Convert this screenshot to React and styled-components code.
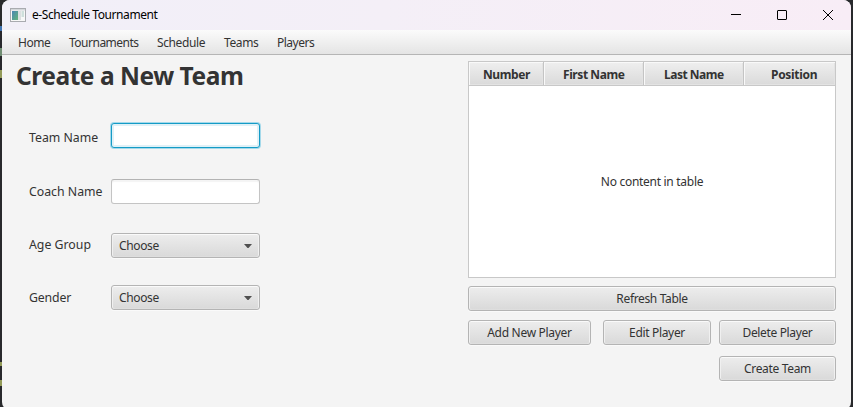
import React from "react";
import styled, { createGlobalStyle } from "styled-components";

const GlobalStyle = createGlobalStyle`
  *, *::before, *::after { box-sizing: border-box; }
  html, body { margin: 0; height: 100%; overflow: hidden; background: #28292c; }
  body, button, input { font-family: "Noto Sans", "Open Sans", sans-serif; font-size: 12px; color: #333; }
`;

const Desktop = styled.div`
  height: 407px;
  width: 853px;
  padding: 0 2px;
  overflow: hidden;
  background:
    linear-gradient(#3e72b0, #3e72b0) 0 26px / 2px 5px no-repeat,
    linear-gradient(#6f8d72, #6f8d72) 0 48px / 2px 8px no-repeat,
    linear-gradient(#929a58, #929a58) 0 70px / 2px 8px no-repeat,
    linear-gradient(#929a58, #929a58) 0 362px / 2px 4px no-repeat,
    linear-gradient(#929a58, #929a58) 0 380px / 2px 6px no-repeat,
    #28292c;
`;

const Window = styled.div`
  height: 410px;
  border-radius: 8px;
  overflow: hidden;
  background: #f4f4f4;
`;

const TitleBar = styled.header`
  display: flex;
  align-items: center;
  height: 30px;
  padding-left: 8px;
  background: linear-gradient(90deg, #f1eff8, #f4eff7 45%, #f8edf6);
`;

const WindowTitle = styled.div`
  flex: 1;
  margin-left: 6px;
  color: #000;
  line-height: 30px;
  letter-spacing: ${(p) => p.$track}px;
`;

const CaptionButton = styled.div`
  display: flex;
  width: 46px;
  height: 30px;
  align-items: center;
  justify-content: center;
`;

const CaptionButtons = styled.div`
  display: flex;
  padding-top: 0;
`;

const MenuBar = styled.nav`
  display: flex;
  height: 25px;
  padding-left: 16px;
  background: linear-gradient(#fbfbfb, #e4e4e4);
  border-bottom: 1px solid #b5b5b5;
`;

const MenuItem = styled.div`
  width: ${(p) => p.$w}px;
  line-height: 25px;
  letter-spacing: ${(p) => p.$track}px;
  white-space: nowrap;
`;

const Content = styled.main`
  display: grid;
  grid-template-columns: 466px 368px;
`;

const Heading = styled.h1`
  margin: 2px 0 0 14px;
  height: 38px;
  font-size: 24.5px;
  line-height: 38px;
  font-weight: 700;
  letter-spacing: ${(p) => p.$track}px;
`;

const Form = styled.form`
  display: grid;
  grid-template-columns: 82px 149px;
  grid-template-rows: 56px 54px 52px 25px;
  margin: 28px 0 0 27px;
`;

const Label = styled.label`
  height: 25px;
  margin-top: ${(p) => p.$dy || 0}px;
  line-height: 25px;
  font-size: 12.3px;
  letter-spacing: ${(p) => p.$track}px;
  white-space: nowrap;
`;

const TextField = styled.input`
  height: 25px;
  width: 149px;
  padding: 0 8px;
  border: 1px solid ${(p) => (p.$active ? "#159bc6" : "#c4c4c4")};
  border-top-color: ${(p) => (p.$active ? "#159bc6" : "#b3b3b3")};
  border-radius: 3px;
  background: #fff;
  box-shadow: ${(p) =>
    p.$active
      ? "0 0 0 1px #a5d9ea, inset 0 0 0 2px #e0f1f7"
      : "inset 0 2px 1px #f4f4f4"};
  outline: none;
`;

const raised = `
  height: 25px;
  border: 1px solid #b4b4b4;
  border-radius: 3px;
  background: linear-gradient(#ededed, #d9d9d9);
  box-shadow: inset 0 1px 0 #fafafa, inset 1px 0 0 #f0f0f0, inset -1px 0 0 #f0f0f0, inset 0 -1px 0 #dedede, 0 1px 0 #fafafa;
  line-height: 23px;
  white-space: nowrap;
`;

const ComboBox = styled.div`
  ${raised}
  display: flex;
  align-items: center;
  justify-content: space-between;
  padding: 0 7px;
  letter-spacing: ${(p) => p.$track}px;
`;

const Button = styled.button`
  ${raised}
  width: ${(p) => p.$w}px;
  padding: 0;
  letter-spacing: ${(p) => p.$track}px;
`;

const Panel = styled.section`
  padding-top: 6px;
`;

const Table = styled.div`
  height: 217px;
  border: 1px solid #c8c8c8;
  background: #fff;
`;

const HeaderRow = styled.div`
  display: grid;
  grid-template-columns: 75px 100px 100px 91px;
  height: 24px;
  border-bottom: 1px solid #c8c8c8;
`;

const HeaderCell = styled.div`
  height: 23px;
  padding-left: ${(p) => p.$pad}px;
  border-right: ${(p) => (p.$last ? 0 : 1)}px solid #c4c4c4;
  background: linear-gradient(#efefef, #dadada);
  box-shadow: inset 1px 1px 0 #f9f9f9, inset -1px -1px 0 #e3e3e3;
  font-weight: 700;
  line-height: 25px;
  letter-spacing: ${(p) => p.$track}px;
  white-space: nowrap;
`;

const Placeholder = styled.div`
  height: 191px;
  line-height: 192px;
  text-align: center;
  letter-spacing: ${(p) => p.$track}px;
`;

const ButtonRow = styled.div`
  display: flex;
  justify-content: ${(p) => (p.$end ? "flex-end" : "flex-start")};
  margin-top: ${(p) => p.$top}px;
`;

const Spacer = styled.div`
  width: ${(p) => p.$w}px;
`;

function AppIcon() {
  return (
    <svg width="16" height="14" viewBox="0 0 16 14">
      <defs>
        <linearGradient id="pane" x1="0" y1="0" x2="1" y2="1">
          <stop offset="0" stopColor="#4b86b4" />
          <stop offset="1" stopColor="#62b47a" />
        </linearGradient>
      </defs>
      <rect x="0.5" y="0.5" width="15" height="13" fill="#f8f8f8" stroke="#a9abb0" />
      <rect x="1" y="1" width="14" height="1.5" fill="#d3d6da" />
      <rect x="2" y="3" width="6" height="9" fill="url(#pane)" />
      <rect x="8" y="3" width="3" height="9" fill="#dcdfe0" />
      <rect x="11.5" y="3" width="2.5" height="6" fill="#cfe0dc" />
    </svg>
  );
}

function Arrow() {
  return (
    <svg width="8" height="5" viewBox="0 0 8 5">
      <path d="M0 1H8L4.5 5H3.5Z" fill="#505050" />
    </svg>
  );
}

const menus = [
  ["Home", 51, -0.45],
  ["Tournaments", 88, -0.5],
  ["Schedule", 67, -0.38],
  ["Teams", 53, -0.4],
  ["Players", 50, -0.5],
];

const columns = [
  ["Number", 14, -0.4],
  ["First Name", 19, -0.42],
  ["Last Name", 20, -0.5],
  ["Position", 27, -0.3],
];

export default function App() {
  return (
    <Desktop>
      <GlobalStyle />
      <Window>
        <TitleBar>
          <AppIcon />
          <WindowTitle $track={-0.42}>e-Schedule Tournament</WindowTitle>
          <CaptionButtons>
            <CaptionButton>
              <svg width="10" height="10" viewBox="0 0 10 10">
                <path d="M0 4.5H10" stroke="#000" />
              </svg>
            </CaptionButton>
            <CaptionButton>
              <svg width="10" height="10" viewBox="0 0 10 10">
                <rect x="0.5" y="0.5" width="9" height="9" rx="0.5" fill="none" stroke="#000" />
              </svg>
            </CaptionButton>
            <CaptionButton>
              <svg width="10" height="10" viewBox="0 0 10 10">
                <path d="M0 0L10 10M10 0L0 10" stroke="#000" />
              </svg>
            </CaptionButton>
          </CaptionButtons>
        </TitleBar>
        <MenuBar>
          {menus.map(([name, w, track]) => (
            <MenuItem key={name} $w={w} $track={track}>{name}</MenuItem>
          ))}
        </MenuBar>
        <Content>
          <section>
            <Heading $track={-0.46}>Create a New Team</Heading>
            <Form>
              <Label $dy={2} $track={0}>Team Name</Label>
              <TextField $active />
              <Label $track={0}>Coach Name</Label>
              <TextField />
              <Label $dy={-1} $track={0}>Age Group</Label>
              <ComboBox $track={-0.35}>Choose<Arrow /></ComboBox>
              <Label $track={-0.15}>Gender</Label>
              <ComboBox $track={-0.35}>Choose<Arrow /></ComboBox>
            </Form>
          </section>
          <Panel>
            <Table>
              <HeaderRow>
                {columns.map(([name, pad, track], i) => (
                  <HeaderCell key={name} $pad={pad} $track={track} $last={i === 3}>{name}</HeaderCell>
                ))}
              </HeaderRow>
              <Placeholder $track={-0.29}>No content in table</Placeholder>
            </Table>
            <ButtonRow $top={8}>
              <Button $w={368} $track={-0.35}>Refresh Table</Button>
            </ButtonRow>
            <ButtonRow $top={9}>
              <Button $w={123} $track={-0.3}>Add New Player</Button>
              <Spacer $w={12} />
              <Button $w={108} $track={-0.33}>Edit Player</Button>
              <Spacer $w={8} />
              <Button $w={117} $track={-0.36}>Delete Player</Button>
            </ButtonRow>
            <ButtonRow $top={11} $end>
              <Button $w={117} $track={-0.33}>Create Team</Button>
            </ButtonRow>
          </Panel>
        </Content>
      </Window>
    </Desktop>
  );
}
